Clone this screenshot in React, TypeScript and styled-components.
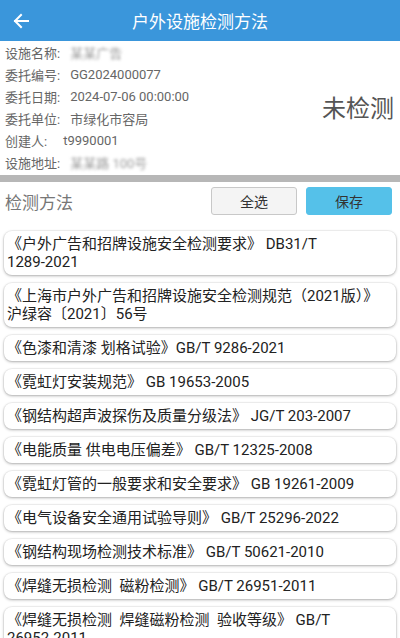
import React from 'react';
import styled, { createGlobalStyle } from 'styled-components';

const GlobalStyle = createGlobalStyle`
  html, body {
    margin: 0;
    padding: 0;
    background: #ffffff;
  }
  body {
    font-family: Roboto, "Noto Sans CJK SC", sans-serif;
  }
`;

interface IInfoItem {
  label: string;
  value: string;
  blurred?: boolean;
  gap?: number;
}

interface IMethod {
  title: string;
  code: string;
}

const infoItems: IInfoItem[] = [
  { label: '设施名称:', value: '某某广告', blurred: true },
  { label: '委托编号:', value: 'GG2024000077' },
  { label: '委托日期:', value: '2024-07-06 00:00:00' },
  { label: '委托单位:', value: '市绿化市容局' },
  { label: '创建人:', value: 't9990001', gap: 16 },
  { label: '设施地址:', value: '某某路 100号', blurred: true },
];

const methods: IMethod[] = [
  { title: '《户外广告和招牌设施安全检测要求》 ', code: 'DB31/T 1289-2021' },
  { title: '《上海市户外广告和招牌设施安全检测规范（2021版）》', code: '沪绿容〔2021〕56号' },
  { title: '《色漆和清漆 划格试验》', code: 'GB/T 9286-2021' },
  { title: '《霓虹灯安装规范》 ', code: 'GB 19653-2005' },
  { title: '《钢结构超声波探伤及质量分级法》 ', code: 'JG/T 203-2007' },
  { title: '《电能质量 供电电压偏差》 ', code: 'GB/T 12325-2008' },
  { title: '《霓虹灯管的一般要求和安全要求》 ', code: 'GB 19261-2009' },
  { title: '《电气设备安全通用试验导则》 ', code: 'GB/T 25296-2022' },
  { title: '《钢结构现场检测技术标准》 ', code: 'GB/T 50621-2010' },
  { title: '《焊缝无损检测  磁粉检测》 ', code: 'GB/T 26951-2011' },
  { title: '《焊缝无损检测  焊缝磁粉检测  验收等级》 ', code: 'GB/T 26952-2011' },
];

const Page = styled.div`
  width: 400px;
  height: 638px;
  overflow: hidden;
  background: #ffffff;
`;

const Header = styled.header`
  height: 41px;
  background: #3a96db;
  display: flex;
  align-items: center;
  justify-content: center;
  position: relative;
`;

const BackButton = styled.button`
  position: absolute;
  left: 8px;
  top: 8px;
  width: 26px;
  height: 26px;
  padding: 0;
  border: none;
  background: transparent;
  display: flex;
  align-items: center;
  justify-content: center;
`;

const Title = styled.h1`
  margin: 0;
  font-size: 17px;
  font-weight: 400;
  color: #ffffff;
`;

const InfoSection = styled.section`
  display: flex;
  align-items: center;
  justify-content: space-between;
  padding: 0 6px 2px 5px;
  border-bottom: 7px solid #b7b7b7;
`;

const InfoList = styled.div`
  display: flex;
  flex-direction: column;
`;

const InfoRow = styled.div`
  display: flex;
  align-items: center;
  height: 22px;
  font-size: 13px;
  color: #666666;
  white-space: nowrap;
`;

const InfoLabel = styled.span<{ $gap: number }>`
  margin-right: ${({ $gap }) => $gap}px;
`;

const InfoValue = styled.span<{ $blurred?: boolean }>`
  color: ${({ $blurred }) => ($blurred ? '#9a9a9a' : '#666666')};
  filter: ${({ $blurred }) => ($blurred ? 'blur(1.6px)' : 'none')};
`;

const Status = styled.div`
  font-size: 24px;
  color: #555555;
  margin-top: -2px;
`;

const SectionBar = styled.div`
  display: flex;
  align-items: center;
  height: 38px;
  padding: 0 8px 0 5px;
  margin-bottom: 11px;
`;

const SectionTitle = styled.h2`
  flex: 1;
  margin: 0;
  font-size: 17px;
  font-weight: 400;
  color: #777777;
`;

const ActionButton = styled.button<{ $primary?: boolean }>`
  width: 86px;
  height: 28px;
  margin-left: 9px;
  border-radius: 3px;
  font-family: Roboto, "Noto Sans CJK SC", sans-serif;
  font-size: 14px;
  color: #333333;
  background: ${({ $primary }) => ($primary ? '#55c1e9' : '#f4f4f4')};
  border: 1px solid ${({ $primary }) => ($primary ? '#55c1e9' : '#c8c8c8')};
  padding: 0;
`;

const MethodList = styled.div`
  display: flex;
  flex-direction: column;
  gap: 8px;
  padding: 0 4px;
`;

const MethodCard = styled.div`
  padding: 4px 7px 4px 3px;
  border-radius: 8px;
  background: #ffffff;
  box-shadow: 0 1px 3px rgba(0, 0, 0, 0.3), 0 0 0 1px rgba(0, 0, 0, 0.04);
  font-size: 15px;
  line-height: 18px;
  color: #222222;
  white-space: pre-wrap;
`;

const CodeWord = styled.span`
  white-space: nowrap;
`;

const BackArrow = () => (
  <svg width="18" height="18" viewBox="0 0 18 18" fill="none">
    <path d="M16 9H3M9 3L3 9l6 6" stroke="#ffffff" strokeWidth="2" strokeLinecap="square" />
  </svg>
);

const App = () => (
  <Page>
    <GlobalStyle />
    <Header>
      <BackButton>
        <BackArrow />
      </BackButton>
      <Title>户外设施检测方法</Title>
    </Header>
    <InfoSection>
      <InfoList>
        {infoItems.map((item) => (
          <InfoRow key={item.label}>
            <InfoLabel $gap={item.gap ?? 10}>{item.label}</InfoLabel>
            <InfoValue $blurred={item.blurred}>{item.value}</InfoValue>
          </InfoRow>
        ))}
      </InfoList>
      <Status>未检测</Status>
    </InfoSection>
    <SectionBar>
      <SectionTitle>检测方法</SectionTitle>
      <ActionButton>全选</ActionButton>
      <ActionButton $primary>保存</ActionButton>
    </SectionBar>
    <MethodList>
      {methods.map((m) => (
        <MethodCard key={m.title}>
          {m.title}
          {m.code.split(' ').map((word, i) => (
            <React.Fragment key={word}>
              {i > 0 && ' '}
              <CodeWord>{word}</CodeWord>
            </React.Fragment>
          ))}
        </MethodCard>
      ))}
    </MethodList>
  </Page>
);

export default App;
